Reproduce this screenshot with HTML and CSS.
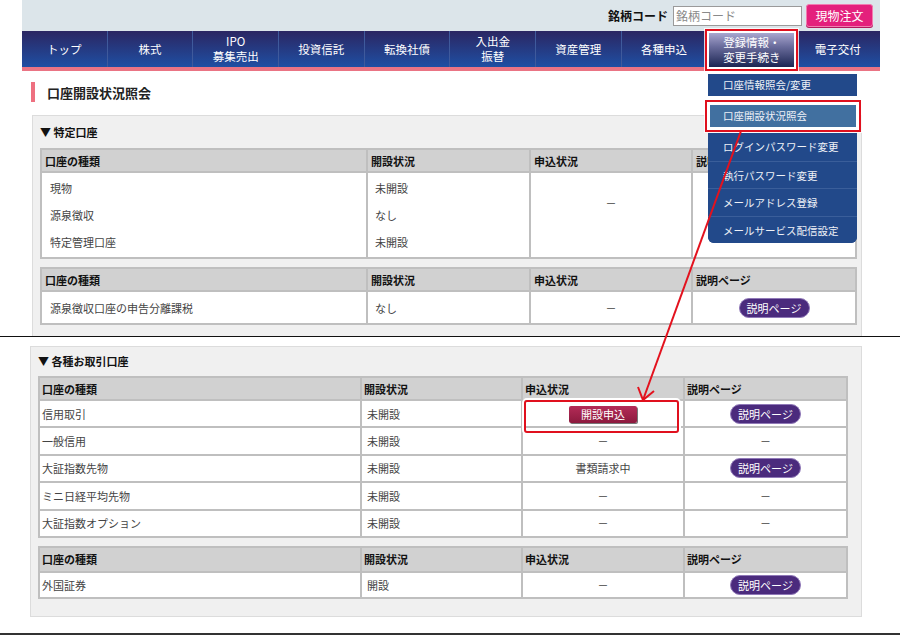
FILE: index.html
```html
<!DOCTYPE html>
<html lang="ja">
<head>
<meta charset="utf-8">
<title>口座開設状況照会</title>
<link rel="stylesheet" href="styles.css">
</head>
<body>
<div class="page">
  <section class="shot-top">
    <div class="site">
      <div class="topbar">
        <span class="code-label">銘柄コード</span>
        <input class="code-input" type="text" placeholder="銘柄コード">
        <button class="order-btn" type="button">現物注文</button>
      </div>
      <nav class="gnav">
        <a class="gnav-item"><span>トップ</span></a>
        <a class="gnav-item"><span>株式</span></a>
        <a class="gnav-item"><span>IPO</span><span>募集売出</span></a>
        <a class="gnav-item"><span>投資信託</span></a>
        <a class="gnav-item"><span>転換社債</span></a>
        <a class="gnav-item"><span>入出金</span><span>振替</span></a>
        <a class="gnav-item"><span>資産管理</span></a>
        <a class="gnav-item"><span>各種申込</span></a>
        <a class="gnav-item is-active"><span class="active-box"><span>登録情報・</span><span>変更手続き</span></span></a>
        <a class="gnav-item"><span>電子交付</span></a>
      </nav>
      <h1 class="page-title">口座開設状況照会</h1>
      <div class="panel panel-1">
        <h2 class="panel-title">▼ 特定口座</h2>
        <table class="grid grid-a">
          <colgroup><col class="c1"><col class="c2"><col class="c3"><col class="c4"></colgroup>
          <tr class="head"><th>口座の種類</th><th>開設状況</th><th>申込状況</th><th>説明ページ</th></tr>
          <tr class="multi">
            <td class="lines pl8">現物<br>源泉徴収<br>特定管理口座</td>
            <td class="lines pl7">未開設<br>なし<br>未開設</td>
            <td class="center dash-top">－</td>
            <td></td>
          </tr>
        </table>
        <table class="grid grid-a grid-gap">
          <colgroup><col class="c1"><col class="c2"><col class="c3"><col class="c4"></colgroup>
          <tr class="head"><th>口座の種類</th><th>開設状況</th><th>申込状況</th><th>説明ページ</th></tr>
          <tr class="row-34">
            <td class="pl8">源泉徴収口座の申告分離課税</td>
            <td class="pl7">なし</td>
            <td class="center">－</td>
            <td class="center"><span class="explain-btn">説明ページ</span></td>
          </tr>
        </table>
      </div>
    </div>
  </section>
  <div class="cut cut-1"></div>
  <section class="shot-bottom">
    <div class="panel panel-2">
      <h2 class="panel-title title-2">▼ 各種お取引口座</h2>
      <table class="grid grid-b">
        <colgroup><col class="d1"><col class="d2"><col class="d3"><col class="d4"></colgroup>
        <tr class="head head-22"><th>口座の種類</th><th>開設状況</th><th>申込状況</th><th>説明ページ</th></tr>
        <tr class="row-27"><td>信用取引</td><td class="pl5">未開設</td><td class="center"><span class="apply-btn">開設申込</span></td><td class="center"><span class="explain-btn">説明ページ</span></td></tr>
        <tr class="row-27"><td>一般信用</td><td class="pl5">未開設</td><td class="center">－</td><td class="center">－</td></tr>
        <tr class="row-27"><td>大証指数先物</td><td class="pl5">未開設</td><td class="center">書類請求中</td><td class="center"><span class="explain-btn">説明ページ</span></td></tr>
        <tr class="row-27"><td>ミニ日経平均先物</td><td class="pl5">未開設</td><td class="center">－</td><td class="center">－</td></tr>
        <tr class="row-27"><td>大証指数オプション</td><td class="pl5">未開設</td><td class="center">－</td><td class="center">－</td></tr>
      </table>
      <table class="grid grid-b grid-gap-b">
        <colgroup><col class="d1"><col class="d2"><col class="d3"><col class="d4"></colgroup>
        <tr class="head head-25"><th>口座の種類</th><th>開設状況</th><th>申込状況</th><th>説明ページ</th></tr>
        <tr class="row-26"><td>外国証券</td><td class="pl5">開設</td><td class="center">－</td><td class="center"><span class="explain-btn">説明ページ</span></td></tr>
      </table>
    </div>
  </section>
  <div class="cut cut-2"></div>

  <ul class="dropdown">
    <li class="dd-item dd-first">口座情報照会/変更</li>
    <li class="dd-item dd-current">口座開設状況照会</li>
    <li class="dd-group">
      <ul>
        <li class="dd-item">ログインパスワード変更</li>
        <li class="dd-item">執行パスワード変更</li>
        <li class="dd-item">メールアドレス登録</li>
        <li class="dd-item">メールサービス配信設定</li>
      </ul>
    </li>
  </ul>
  <div class="callout"></div>
  <svg class="arrow" width="900" height="637" viewBox="0 0 900 637">
    <line x1="741" y1="131" x2="643" y2="400" stroke="#e3121e" stroke-width="2"/>
    <polyline points="638,387 643,400 654,391" fill="none" stroke="#e3121e" stroke-width="2"/>
  </svg>
</div>
</body>
</html>
```

FILE: styles.css
```css
* { box-sizing: border-box; margin: 0; padding: 0; }
html, body { width: 900px; height: 637px; overflow: hidden; background: #fff; }
body {
  font-family: "Noto Sans CJK JP", "Noto Sans", sans-serif;
  font-size: 11px;
  color: #444;
}
.page { position: relative; width: 900px; height: 637px; }

/* ---------- top screenshot ---------- */
.shot-top { height: 336px; overflow: hidden; padding-left: 22px; }
.site { width: 858px; }

.topbar {
  height: 31px;
  background: #dce5ea;
  display: flex;
  align-items: center;
  justify-content: flex-end;
  padding-right: 7px;
}
.code-label { font-size: 12px; font-weight: bold; color: #111; margin-right: 5px; }
.code-input {
  width: 129px; height: 20px;
  border: 1px solid #9a9a9a;
  background: #fff;
  font-family: inherit; font-size: 12px;
  padding: 0 2px;
  margin-right: 4px;
}
.code-input::placeholder { color: #8a8a8a; }
.order-btn {
  width: 67px; height: 23px;
  background: #e4207c;
  border: 1px solid #f27cb0;
  border-radius: 3px;
  color: #fff;
  font-family: inherit; font-size: 12px;
  box-shadow: 0 1px 0 #b0185c;
}

.gnav {
  display: flex;
  height: 40px;
  background: linear-gradient(#2b2662, #1f4fa3);
  border-bottom: 4px solid #ea7484;
  position: relative;
}
.gnav-item {
  flex: 1;
  display: flex;
  flex-direction: column;
  align-items: center;
  justify-content: center;
  text-align: center;
  color: #fff;
  font-size: 11.5px;
  border-left: 1px solid #3f5a9c;
}
.gnav-item > span { display: block; height: 15px; line-height: 15px; }
.gnav-item:first-child { border-left: none; }
.gnav-item.is-active { justify-content: flex-start; align-items: flex-start; }
.gnav-item > .active-box {
  display: flex;
  flex-direction: column;
  align-items: center;
  justify-content: center;
  width: 85px;
  height: 35px;
  margin: 2px 0 0 2px;
  background: linear-gradient(#a9a7cf, #6a6c9c 40%, #1b2552);
  box-shadow: 0 0 0 2px #fff, 0 0 0 4px #e0101e, 0 0 0 5px rgba(255,255,255,0.8);
  position: relative;
  z-index: 2;
}
.active-box span { display: block; height: 15px; line-height: 15px; }

.page-title {
  margin: 11px 0 0 9px;
  height: 20px;
  border-left: 4px solid #ee7080;
  padding-left: 12px;
  font-size: 13px;
  font-weight: bold;
  color: #222;
  display: flex;
  align-items: center;
}

.panel {
  background: #f0f0f0;
  border: 1px solid #dcdcdc;
}
.panel-1 {
  margin: 13px 0 0 10px;
  width: 830px;
  height: 260px;
  padding: 0 6px 0 7px;
}
.panel-title {
  height: 32px;
  line-height: 32px;
  font-size: 11px;
  font-weight: bold;
  color: #111;
}
.title-2 { height: 29px; line-height: 29px; }

.grid {
  border-collapse: collapse;
  table-layout: fixed;
  background: #fff;
}
.grid-a { width: 815px; }
.grid-b { width: 808px; }
.grid-a .c1 { width: 326px; }
.grid-a .c2 { width: 163px; }
.grid-a .c3 { width: 162px; }
.grid-a .c4 { width: 164px; }
.grid-b .d1 { width: 322px; }
.grid-b .d2 { width: 161px; }
.grid-b .d3 { width: 162px; }
.grid-b .d4 { width: 163px; }

.grid th, .grid td { border: 2px solid #bfbfbf; }
.grid th {
  background: #d1d1d1;
  text-align: left;
  font-weight: bold;
  color: #111;
  padding: 0 2px;
  font-size: 11px;
}
.grid td { padding: 0 2px; color: #444; }
.grid-a th { padding-left: 3px; }
.head th { height: 23px; }
.head-22 th { height: 23px; }
.head-25 th { height: 25px; }
.row-34 td { height: 33px; }
.row-27 td { height: 27.4px; }
.row-26 td { height: 26px; }
.multi td { height: 86px; }
.lines { vertical-align: top; line-height: 27px; padding-top: 2px !important; }
.pl8 { padding-left: 8px !important; }
.pl7 { padding-left: 7px !important; }
.pl5 { padding-left: 5px !important; }
.center { text-align: center; }
.dash-top { vertical-align: middle; padding-bottom: 24px !important; }
.grid-gap { margin-top: 8px; }
.grid-gap-b { margin-top: 8px; }

.explain-btn {
  display: inline-block;
  width: 71px; height: 20px;
  border-radius: 10px;
  background: #4b2b7d;
  border: 1px solid #9079b8;
  color: #fff;
  line-height: 18px;
  font-size: 11px;
  vertical-align: middle;
}
.apply-btn {
  display: inline-block;
  width: 68px; height: 17px;
  border-radius: 2px;
  background: linear-gradient(#b42b57, #8c1a3e);
  color: #fff;
  line-height: 17px;
  font-size: 11px;
  box-shadow: 1px 1px 0 #777;
  vertical-align: middle;
}

/* ---------- cut lines ---------- */
.cut-1 { height: 1px; background: #111; }
.cut-2 { height: 2px; background: #333; margin-top: 8px; }

/* ---------- bottom screenshot ---------- */
.shot-bottom { height: 288px; padding-top: 9px; }
.panel-2 {
  margin-left: 30px;
  width: 832px;
  height: 271px;
  padding: 0 15px 0 7px;
}

/* ---------- overlays ---------- */
.dropdown {
  position: absolute;
  left: 708px;
  top: 74px;
  width: 149px;
  list-style: none;
  z-index: 5;
}
.dd-item {
  height: 22px;
  line-height: 22px;
  padding-left: 15px;
  background: #22498a;
  color: #eef1f7;
  font-size: 10.5px;
  white-space: nowrap;
}
.dd-current {
  margin: 9px 0 0 2px;
  width: 146px;
  background: #4170a0;
  box-shadow: 0 0 0 3px #fff, 0 0 0 5px #e0101e, 0 0 0 6px rgba(255,255,255,0.8);
  padding-left: 13px;
}
.dd-group { margin-top: 6px; }
.dd-group ul {
  list-style: none;
  background: #22498a;
  border-radius: 0 0 6px 6px;
  overflow: hidden;
}
.dd-group .dd-item {
  height: 27.5px;
  line-height: 27.5px;
  border-top: 1px solid #3a5e9a;
}
.dd-group .dd-item:first-child { border-top: none; }

.callout {
  position: absolute;
  left: 524px;
  top: 400px;
  width: 155px;
  height: 33px;
  border: 2px solid #e0101e;
  border-radius: 3px;
  box-shadow: 0 0 0 2px #fff;
  z-index: 4;
}
.arrow {
  position: absolute;
  left: 0;
  top: 0;
  z-index: 6;
  pointer-events: none;
}
```
